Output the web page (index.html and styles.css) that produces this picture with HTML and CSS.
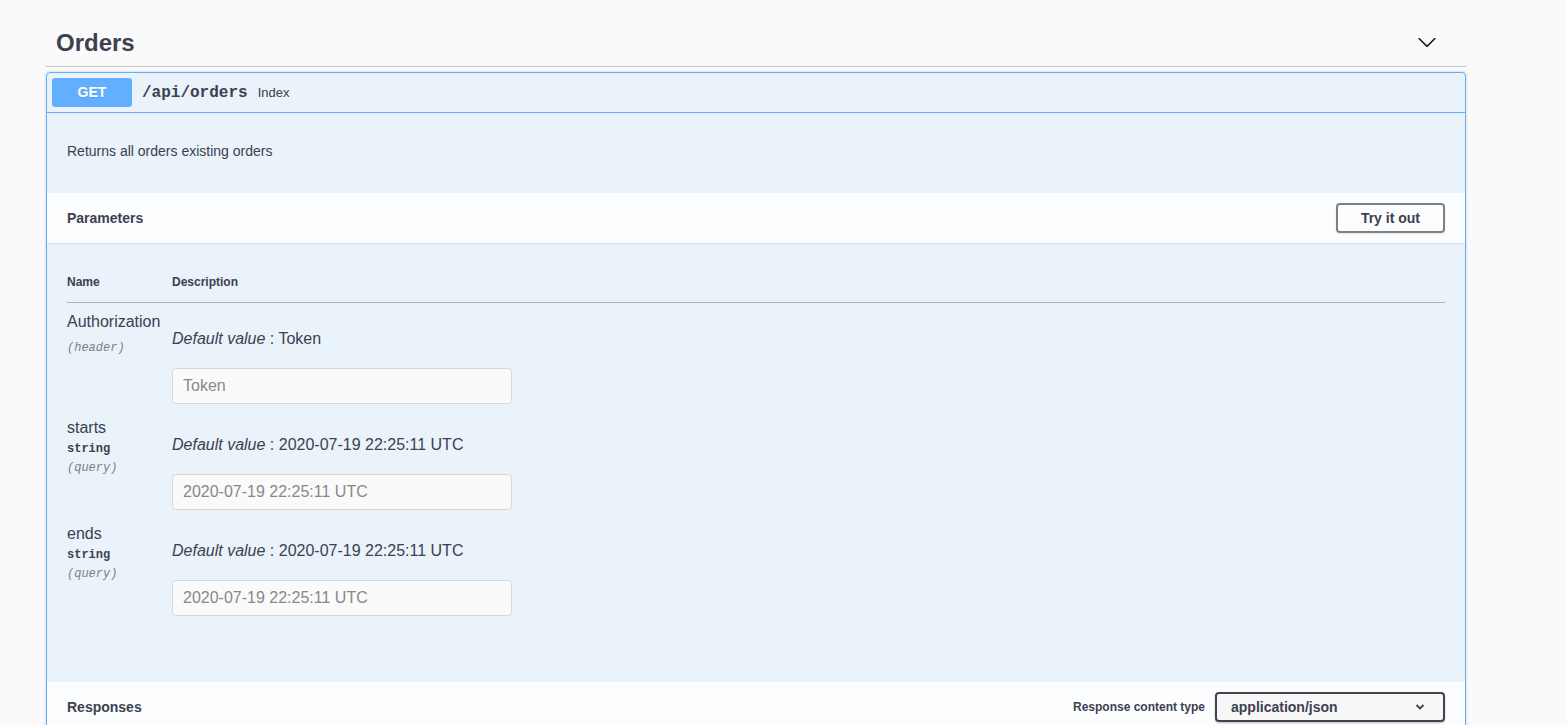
FILE: index.html
```html
<!DOCTYPE html>
<html lang="en">
<head>
<meta charset="utf-8">
<title>Orders</title>
<link rel="stylesheet" href="styles.css">
</head>
<body>
<div class="wrapper">
  <h3 class="opblock-tag">
    <span class="tag-name">Orders</span>
    <button class="expand" type="button" aria-label="Collapse">
      <svg width="20" height="20" viewBox="0 0 20 20"><path d="M17.418 6.109c.272-.268.709-.268.979 0s.271.701 0 .969l-7.908 7.83c-.27.268-.707.268-.979 0l-7.908-7.83c-.27-.268-.27-.701 0-.969.271-.268.709-.268.979 0L10 13.25l7.418-7.141z"/></svg>
    </button>
  </h3>
  <div class="opblock">
    <div class="summary">
      <span class="method">GET</span>
      <span class="path">/api/orders</span>
      <span class="summary-desc">Index</span>
    </div>
    <div class="desc-wrapper">
      <p>Returns all orders existing orders</p>
    </div>
    <div class="section-header">
      <h4 class="section-title">Parameters</h4>
      <button class="btn-try" type="button">Try it out</button>
    </div>
    <div class="table-container">
      <table class="params">
        <colgroup><col class="col-name"><col></colgroup>
        <thead>
          <tr><th>Name</th><th>Description</th></tr>
        </thead>
        <tbody>
          <tr>
            <td>
              <div class="param-name">Authorization</div>
              <div class="param-type"></div>
              <div class="param-in">(header)</div>
            </td>
            <td>
              <p class="default"><i>Default value</i> : Token</p>
              <input class="param-input" type="text" placeholder="Token" disabled>
            </td>
          </tr>
          <tr>
            <td>
              <div class="param-name">starts</div>
              <div class="param-type">string</div>
              <div class="param-in">(query)</div>
            </td>
            <td>
              <p class="default"><i>Default value</i> : 2020-07-19 22:25:11 UTC</p>
              <input class="param-input" type="text" value="2020-07-19 22:25:11 UTC" disabled>
            </td>
          </tr>
          <tr>
            <td>
              <div class="param-name">ends</div>
              <div class="param-type">string</div>
              <div class="param-in">(query)</div>
            </td>
            <td>
              <p class="default"><i>Default value</i> : 2020-07-19 22:25:11 UTC</p>
              <input class="param-input" type="text" value="2020-07-19 22:25:11 UTC" disabled>
            </td>
          </tr>
        </tbody>
      </table>
    </div>
    <div class="section-header">
      <h4 class="section-title">Responses</h4>
      <span class="ct-label">Response content type</span>
      <div class="select">
        <span>application/json</span>
        <svg width="10" height="6" viewBox="0 0 10 6"><polyline points="1.5,1 5,4.5 8.5,1" fill="none" stroke="#3b4151" stroke-width="1.8"/></svg>
      </div>
    </div>
    <div class="responses-inner"></div>
  </div>
</div>
</body>
</html>
```
FILE: styles.css
```css
* { box-sizing: border-box; }
html, body { margin: 0; padding: 0; background: #fafafa; }
body {
  font-family: "Liberation Sans", Arial, sans-serif;
  color: #3b4151;
}
.wrapper {
  width: 1420px;
  margin-left: 46px;
  padding-top: 19px;
}
.opblock-tag {
  display: flex;
  align-items: center;
  margin: 0 0 5px;
  padding: 10px 20px 9px 10px;
  border-bottom: 1px solid rgba(59, 65, 81, 0.3);
  font-size: 24px;
  line-height: 28px;
  font-weight: 700;
  color: #3b4151;
}
.tag-name { flex: 1; }
.expand {
  border: none;
  background: none;
  padding: 0;
  margin: 0 9px 2px 0;
  width: 20px;
  height: 20px;
  display: flex;
}
.expand svg { fill: #111; }

.opblock {
  border: 1px solid #61affe;
  border-radius: 4px;
  background: rgba(97, 175, 254, 0.1);
  box-shadow: 0 0 3px rgba(0, 0, 0, 0.19);
  overflow: hidden;
}
.summary {
  display: flex;
  align-items: center;
  padding: 5px;
  border-bottom: 1px solid #61affe;
}
.method {
  min-width: 80px;
  padding: 6px 15px;
  border-radius: 3px;
  background: #61affe;
  color: #fff;
  font-size: 14px;
  line-height: 17px;
  font-weight: 700;
  text-align: center;
  text-shadow: 0 1px 0 rgba(0, 0, 0, 0.1);
}
.path {
  padding: 0 10px;
  font-family: "Liberation Mono", "Courier New", monospace;
  font-size: 16px;
  font-weight: 700;
  color: #3b4151;
}
.summary-desc {
  font-size: 13px;
  color: #3b4151;
}
.desc-wrapper {
  padding: 15px 20px;
}
.desc-wrapper p {
  margin: 13px 0 17px;
  font-size: 14px;
  line-height: 20px;
}
.section-header {
  display: flex;
  align-items: center;
  min-height: 50px;
  padding: 8px 20px;
  background: rgba(255, 255, 255, 0.8);
  box-shadow: 0 1px 2px rgba(0, 0, 0, 0.1);
}
.section-title {
  flex: 1;
  margin: 0;
  font-size: 14px;
  font-weight: 700;
}
.btn-try {
  padding: 5px 23px;
  border: 2px solid #808080;
  border-radius: 4px;
  background: transparent;
  box-shadow: 0 1px 2px rgba(0, 0, 0, 0.1);
  font-family: "Liberation Sans", Arial, sans-serif;
  font-size: 14px;
  line-height: 16px;
  font-weight: 700;
  color: #3b4151;
}
.table-container {
  padding: 20px 20px 61px;
}
.responses-inner {
  min-height: 80px;
  padding: 20px;
}
.params {
  width: 100%;
  border-collapse: collapse;
  table-layout: fixed;
}
.col-name { width: 105px; }
.params th {
  padding: 12px 0;
  text-align: left;
  font-size: 12px;
  line-height: 15px;
  font-weight: 700;
  border-bottom: 1px solid rgba(59, 65, 81, 0.2);
}
.params td {
  padding: 10px 0 0;
  vertical-align: top;
}
.param-name {
  font-size: 16px;
  line-height: 18px;
}
.param-type {
  padding: 5px 0;
  min-height: 10px;
  font-family: "Liberation Mono", "Courier New", monospace;
  font-size: 12px;
  line-height: 14px;
  font-weight: 700;
}
.param-in {
  font-family: "Liberation Mono", "Courier New", monospace;
  font-size: 12px;
  line-height: 14px;
  font-style: italic;
  color: #808080;
}
.default {
  margin: 17px 0 20px;
  font-size: 16px;
  line-height: 18px;
}
.param-input {
  display: block;
  width: 340px;
  margin: 0 0 5px;
  padding: 8px 10px;
  border: 1px solid #d9d9d9;
  border-radius: 4px;
  background: #fafafa;
  font-family: "Liberation Sans", Arial, sans-serif;
  font-size: 16px;
  line-height: 18px;
  color: #888;
  -webkit-text-fill-color: #888;
  opacity: 1;
}
.param-input::placeholder { color: #888; -webkit-text-fill-color: #888; }
.ct-label {
  margin-right: 10px;
  font-size: 12px;
  font-weight: 700;
}
.select {
  display: flex;
  align-items: center;
  justify-content: space-between;
  width: 230px;
  height: 30px;
  padding: 0 18px 0 14px;
  border: 2px solid #41444e;
  border-radius: 4px;
  background: #f7f7f7;
  box-shadow: 0 1px 2px 0 rgba(0, 0, 0, 0.25);
  font-size: 14px;
  font-weight: 700;
  color: #3b4151;
}
.select svg { display: block; }
```
